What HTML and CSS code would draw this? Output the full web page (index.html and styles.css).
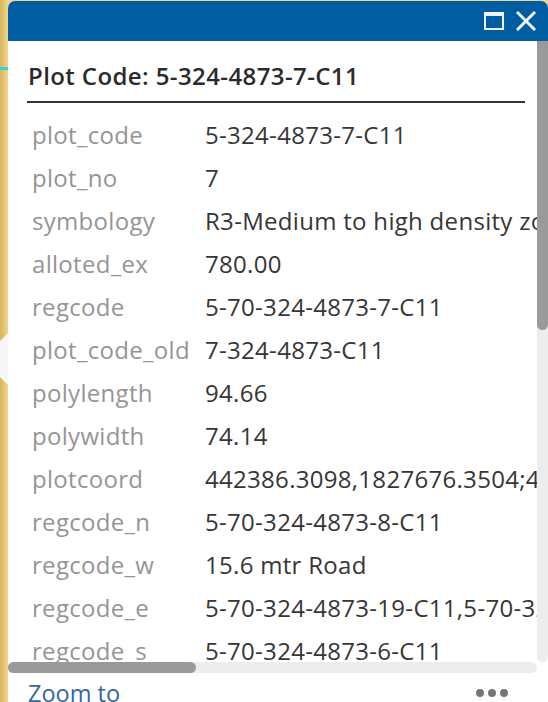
FILE: index.html
```html
<!DOCTYPE html>
<html>
<head>
<meta charset="utf-8">
<link rel="stylesheet" href="styles.css">
</head>
<body>
<div class="map-line"></div>
<div class="pointer"></div>
<div class="popup">
  <div class="header">
    <svg class="icon" width="20" height="20" viewBox="0 0 20 20"><rect x="1" y="2" width="18" height="16" fill="none" stroke="#eef4fa" stroke-width="2"/><rect x="1" y="2" width="18" height="3" fill="#eef4fa"/></svg>
    <svg class="icon" width="20" height="20" viewBox="0 0 20 20"><path d="M2 2 L18 18 M18 2 L2 18" stroke="#eef4fa" stroke-width="3" stroke-linecap="square"/></svg>
  </div>
  <div class="scroller">
    <div class="viewport">
      <div class="content">
        <div class="title">Plot Code: 5-324-4873-7-C11</div>
        <div class="attrs">
          <div class="k">plot_code</div><div class="v">5-324-4873-7-C11</div>
          <div class="k">plot_no</div><div class="v">7</div>
          <div class="k">symbology</div><div class="v">R3-Medium to high density zone</div>
          <div class="k">alloted_ex</div><div class="v">780.00</div>
          <div class="k">regcode</div><div class="v">5-70-324-4873-7-C11</div>
          <div class="k">plot_code_old</div><div class="v">7-324-4873-C11</div>
          <div class="k">polylength</div><div class="v">94.66</div>
          <div class="k">polywidth</div><div class="v">74.14</div>
          <div class="k">plotcoord</div><div class="v">442386.3098,1827676.3504;442412.5512,1827748.0027;442482.4027,1827722.7761;442456.0912,1827651.0932</div>
          <div class="k">regcode_n</div><div class="v">5-70-324-4873-8-C11</div>
          <div class="k">regcode_w</div><div class="v">15.6 mtr Road</div>
          <div class="k">regcode_e</div><div class="v">5-70-324-4873-19-C11,5-70-324-4873-20-C11</div>
          <div class="k">regcode_s</div><div class="v">5-70-324-4873-6-C11</div>
        </div>
      </div>
    </div>
    <div class="vtrack"><div class="vthumb"></div></div>
    <div class="htrack"><div class="hthumb"></div></div>
    <div class="corner"></div>
  </div>
  <div class="footer">
    <span class="zoom">Zoom to</span>
    <span class="dots"><i></i><i></i><i></i></span>
  </div>
</div>
</body>
</html>
```
FILE: styles.css
```css
html, body {
  margin: 0;
  padding: 0;
}
body {
  width: 548px;
  height: 702px;
  overflow: hidden;
  position: relative;
  background: linear-gradient(90deg, #d8b45c 0px, #efd68c 8px, #efd68c 100%);
  font-family: "Open Sans", Lato, sans-serif;
}
.map-line {
  position: absolute;
  left: 0;
  top: 67px;
  width: 8px;
  height: 3px;
  background: #35d3cf;
}
.pointer {
  position: absolute;
  left: -18px;
  top: 333px;
  width: 0;
  height: 0;
  border-top: 26px solid transparent;
  border-bottom: 26px solid transparent;
  border-right: 26px solid #f6f6f6;
}
.popup {
  margin: 1px 0 0 8px;
  width: 540px;
  height: 701px;
  background: #fff;
  border-radius: 7px 7px 0 0;
  overflow: hidden;
  display: flex;
  flex-direction: column;
}
.header {
  flex: 0 0 40px;
  background: #005da1;
  display: flex;
  justify-content: flex-end;
  align-items: center;
  gap: 12px;
  padding-right: 12px;
}
.icon {
  display: block;
}
.scroller {
  display: grid;
  grid-template-columns: 529px 11px;
  grid-template-rows: 621px 11px;
}
.viewport {
  overflow: hidden;
}
.content {
  padding-top: 20px;
  width: max-content;
}
.title {
  margin-left: 19px;
  width: 497px;
  padding-left: 1px;
  font-size: 24px;
  letter-spacing: 0.4px;
  line-height: 30px;
  font-weight: 600;
  color: #2b2b2b;
  padding-bottom: 10px;
  border-bottom: 2px solid #333;
  white-space: nowrap;
}
.attrs {
  display: grid;
  grid-template-columns: 173px max-content;
  grid-auto-rows: 43px;
  align-items: center;
  margin-top: 10px;
  margin-left: 24px;
  font-size: 24px;
  letter-spacing: 0.3px;
  white-space: nowrap;
}
.k {
  color: #959595;
}
.v {
  color: #363636;
}
.vtrack {
  background: #ededed;
  border-radius: 0 0 6px 6px;
}
.vthumb {
  height: 289px;
  background: #9a9a9a;
  border-radius: 0 0 6px 6px;
}
.htrack {
  background: #ededed;
  border-radius: 6px;
}
.hthumb {
  width: 188px;
  height: 11px;
  background: #9a9a9a;
  border-radius: 6px;
}
.corner {
  background: #fff;
}
.footer {
  display: flex;
  justify-content: space-between;
  align-items: center;
  padding: 5px 40px 0 20px;
}
.zoom {
  font-size: 23.5px;
  line-height: 30px;
  color: #33679e;
}
.dots {
  display: flex;
  gap: 4px;
}
.dots i {
  display: block;
  width: 8px;
  height: 8px;
  border-radius: 50%;
  background: #767676;
}
```
